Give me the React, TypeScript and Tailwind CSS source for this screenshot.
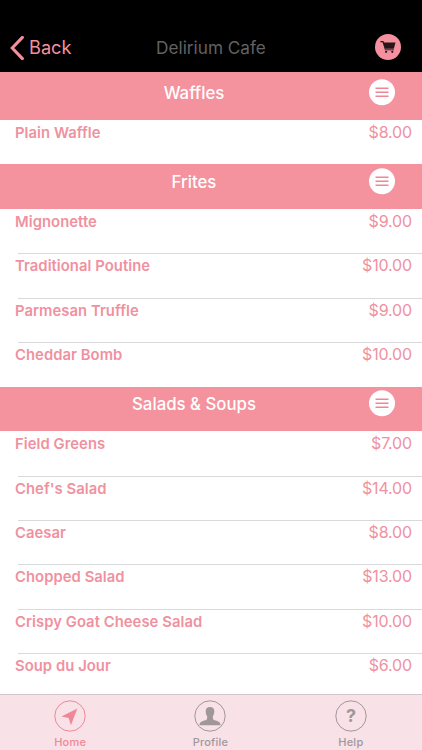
import React from 'react';
import clsx from 'clsx';

interface MenuItem {
  name: string;
  price: string;
}

interface MenuSection {
  title: string;
  items: MenuItem[];
}

const sections: MenuSection[] = [
  {
    title: 'Waffles',
    items: [{ name: 'Plain Waffle', price: '$8.00' }],
  },
  {
    title: 'Frites',
    items: [
      { name: 'Mignonette', price: '$9.00' },
      { name: 'Traditional Poutine', price: '$10.00' },
      { name: 'Parmesan Truffle', price: '$9.00' },
      { name: 'Cheddar Bomb', price: '$10.00' },
    ],
  },
  {
    title: 'Salads & Soups',
    items: [
      { name: 'Field Greens', price: '$7.00' },
      { name: "Chef's Salad", price: '$14.00' },
      { name: 'Caesar', price: '$8.00' },
      { name: 'Chopped Salad', price: '$13.00' },
      { name: 'Crispy Goat Cheese Salad', price: '$10.00' },
      { name: 'Soup du Jour', price: '$6.00' },
    ],
  },
];

function NavBar() {
  return (
    <header className="grid h-[72px] shrink-0 grid-cols-3 items-end bg-black pb-[11px]">
      <button className="flex h-[27px] items-center gap-[5px] pl-[10px] text-[#f5919f]">
        <svg width="14" height="24" viewBox="0 0 14 24" fill="none" stroke="currentColor" strokeWidth="3">
          <path d="M12.4 1.4 2.2 12l10.2 10.6" strokeLinecap="round" />
        </svg>
        <span className="text-[18.2px] leading-[27px]">Back</span>
      </button>
      <h1 className="text-center text-[17.2px] leading-[27px] whitespace-nowrap text-[#626262]">Delirium Cafe</h1>
      <div className="flex justify-end pr-[21px]">
        <button aria-label="Cart">
          <svg className="block" width="26" height="27" viewBox="0 0 26 27">
            <circle cx="13" cy="13" r="13" fill="#f5919f" />
            <path d="M5.4 6.9h3l.6 1.5h11.5l-1.7 6.3H9.6L7.5 8.3H5.4z" fill="#26161a" />
            <path d="M9.8 14.6l.5 1.2h8.6" stroke="#26161a" strokeWidth="0.9" fill="none" />
            <circle cx="11.1" cy="17.8" r="1.1" fill="#26161a" />
            <circle cx="17.3" cy="17.8" r="1.1" fill="#26161a" />
          </svg>
        </button>
      </div>
    </header>
  );
}

function SectionHeader({ title }: { title: string }) {
  return (
    <div className="flex h-[44.45px] items-start bg-[#f4929e] pt-[3.8px]">
      <span className="w-[26px]" />
      <h2 className="flex-1 pr-[7px] text-center text-[16.8px] leading-[28px] font-medium text-white">{title}</h2>
      <button className="mr-[27px]" aria-label={`${title} options`}>
        <svg className="block" width="26" height="27" viewBox="0 0 26 27">
          <circle cx="13" cy="13.2" r="13" fill="#fff" />
          <path d="M6.5 9.2h13M6.5 13.2h13M6.5 17.2h13" stroke="#f08593" strokeWidth="1.5" />
        </svg>
      </button>
    </div>
  );
}

function MenuRow({ item, isFirst }: { item: MenuItem; isFirst: boolean }) {
  return (
    <li className="flex h-[44.45px] flex-col">
      <div className={clsx('ml-[18px] h-px shrink-0', isFirst ? 'bg-transparent' : 'bg-[#d9d9dc]')} />
      <div className="flex justify-between pr-[10px] pl-[15px] leading-[23px] text-[#f0919f]">
        <span className="text-[14.8px] leading-[24px] font-semibold tracking-[0.06px]">{item.name}</span>
        <span className="text-[16px] tracking-[-0.15px]">{item.price}</span>
      </div>
    </li>
  );
}

function TabBar() {
  const tabs = [
    {
      label: 'Home',
      icon: <path d="M23.4 8.6 7.4 16.6l7.3 1.4 2.2 7.2z" fill="currentColor" />,
    },
    {
      label: 'Profile',
      icon: (
        <path
          d="M16 6.9c-3 0-4.5 1.7-4.3 4.6.1 2.3.6 3.6 1.4 4.6v2.7c-.5 1-1.3 1.3-2.7 1.8-2.9.9-4.6 1.5-5 4.6h21.2c-.4-3.1-2.1-3.7-5-4.6-1.4-.5-2.2-.8-2.7-1.8v-2.7c.8-1 1.3-2.3 1.4-4.6.2-2.9-1.3-4.6-4.3-4.6z"
          fill="currentColor"
        />
      ),
    },
    {
      label: 'Help',
      icon: (
        <text x="16" y="22.4" textAnchor="middle" fontSize="18" fontWeight="700" fill="currentColor">
          ?
        </text>
      ),
    },
  ];

  return (
    <nav className="flex h-[56px] shrink-0 border-t border-[#d5c6cc] bg-[#f8e1e7] pr-[1px]">
      {tabs.map((tab, index) => (
        <button
          key={tab.label}
          className={clsx(
            'flex flex-1 flex-col items-center pt-[5px]',
            index === 0 ? 'text-[#f08796]' : 'text-[#a0979b]'
          )}
        >
          <svg className="block shrink-0" width="32" height="32" viewBox="0 0 32 32">
            <circle cx="16" cy="16" r="15.2" fill="none" stroke="currentColor" strokeWidth="1" />
            {tab.icon}
          </svg>
          <span className="mt-[3px] text-[11px] leading-[14px] font-medium tracking-[0.25px]">{tab.label}</span>
        </button>
      ))}
    </nav>
  );
}

export default function App() {
  return (
    <div className="flex h-[750px] w-[422px] flex-col overflow-hidden bg-white font-[Inter,sans-serif]">
      <NavBar />
      <main className="min-h-0 flex-1 overflow-hidden">
        <div className="h-[3.6px] bg-[#f4929e]" />
        {sections.map((section) => (
          <section key={section.title}>
            <SectionHeader title={section.title} />
            <ul>
              {section.items.map((item, index) => (
                <MenuRow key={item.name} item={item} isFirst={index === 0} />
              ))}
            </ul>
          </section>
        ))}
      </main>
      <TabBar />
    </div>
  );
}
